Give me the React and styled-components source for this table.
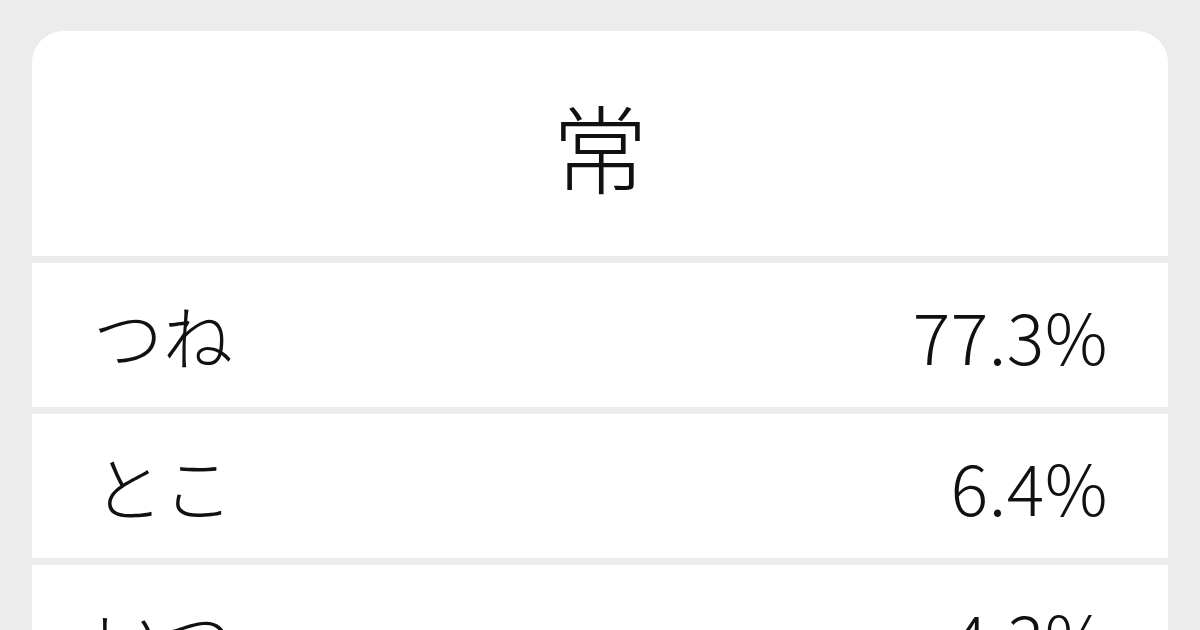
import React from "react";
import styled, { createGlobalStyle } from "styled-components";

const readings = [
  { kana: "つね", pct: "77.3%" },
  { kana: "とこ", pct: "6.4%" },
  { kana: "いつ", pct: "4.3%" },
  { kana: "ジョウ", pct: "3.1%" }
];

const GlobalStyle = createGlobalStyle`
  html, body {
    margin: 0;
    padding: 0;
    background: #ececec;
    font-family: "Noto Sans CJK JP", "Noto Sans", sans-serif;
    color: #111;
  }
`;

const Page = styled.div`
  padding: 31px 32px;
`;

const Card = styled.div`
  display: flex;
  flex-direction: column;
  gap: 7px;
  border-radius: 32px 32px 0 0;
  overflow: hidden;
`;

const Header = styled.div`
  background: #fff;
  height: 225px;
  display: flex;
  align-items: center;
  justify-content: center;
`;

const Kanji = styled.h1`
  margin: 2px 0 0;
  font-size: 96px;
  font-weight: 300;
  line-height: 1;
`;

const Row = styled.div`
  background: #fff;
  height: 144px;
  padding: 0 60px 0 61px;
  display: flex;
  align-items: center;
  justify-content: space-between;
  font-size: 70px;
  font-weight: 300;
  line-height: 1;
`;

const Kana = styled.span``;

const Percent = styled.span`
  font-size: 70px;
  letter-spacing: 0.5px;
`;

export default function App() {
  return (
    <Page>
      <GlobalStyle />
      <Card>
        <Header>
          <Kanji>常</Kanji>
        </Header>
        {readings.map(r => (
          <Row key={r.kana}>
            <Kana>{r.kana}</Kana>
            <Percent>{r.pct}</Percent>
          </Row>
        ))}
      </Card>
    </Page>
  );
}
